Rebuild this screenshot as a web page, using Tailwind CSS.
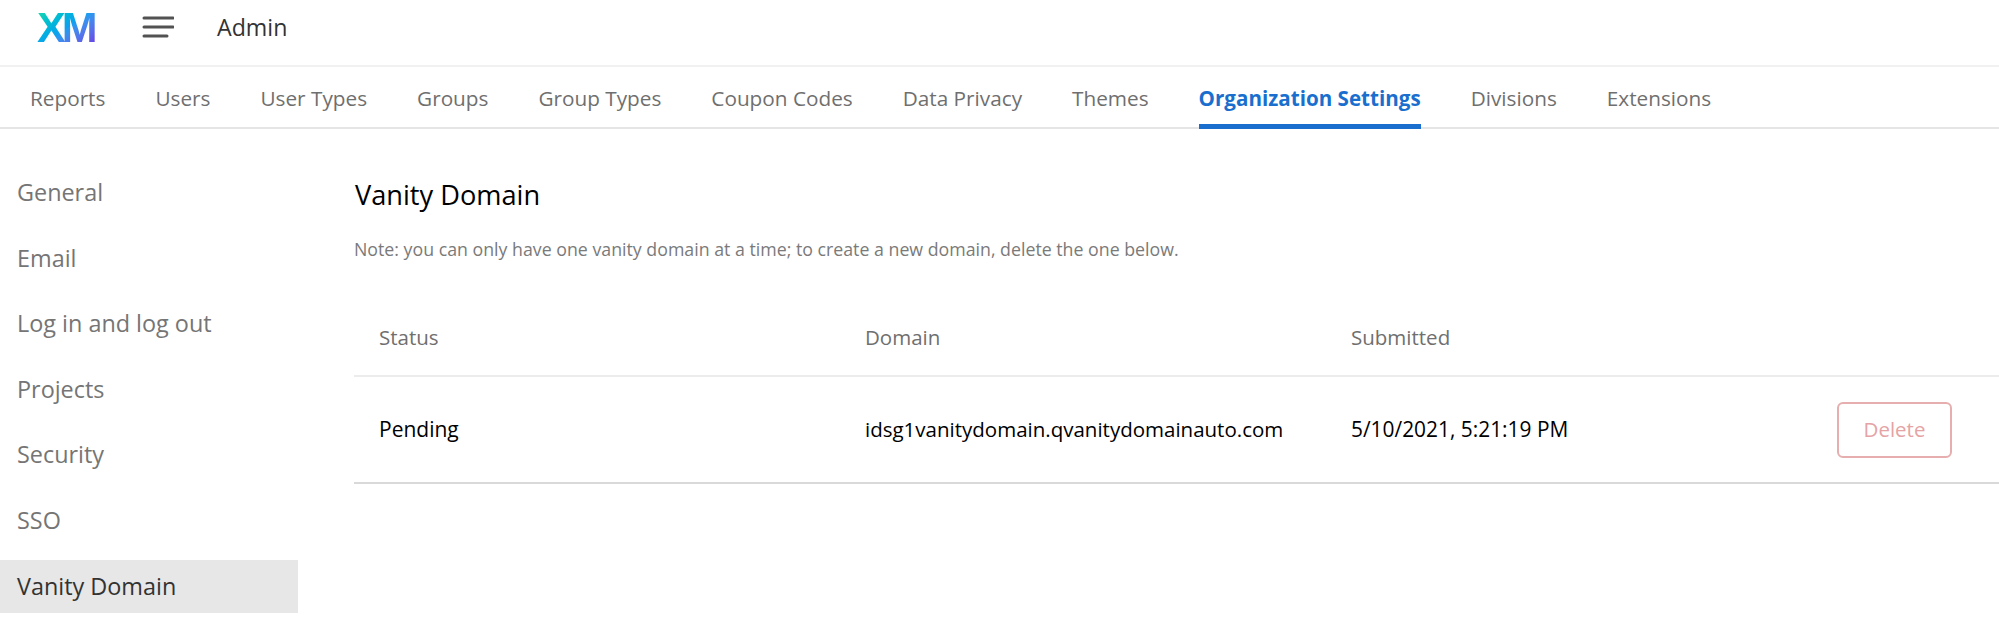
<!DOCTYPE html>
<html lang="en">
<head>
  <meta charset="UTF-8" />
  <title>Admin - Vanity Domain</title>
  <script src="https://cdn.jsdelivr.net/npm/@tailwindcss/browser@4"></script>
</head>
<body class="bg-white font-['Open_Sans',sans-serif] h-[637px] overflow-hidden">
  <!-- Header -->
  <header class="h-[67px] flex items-center pb-[11px] border-b-2 border-[#f1f1f1]">
    <div class="ml-[37px] w-[60px] font-['Liberation_Sans',sans-serif] font-bold text-[43px] leading-none tracking-[-4px] text-transparent bg-clip-text bg-linear-to-br from-[#25dfa0] via-[#0f9ff0] to-[#6a22e0]">XM</div>
    <svg class="ml-[45px]" width="32" height="24" viewBox="0 0 32 24" fill="none" stroke="#525252" stroke-width="3" stroke-linecap="round">
      <path d="M2 3h29M2 12h29M2 21h23" />
    </svg>
    <span class="ml-[43px] text-[23.2px] text-[#333]">Admin</span>
  </header>

  <!-- Tabs -->
  <nav class="h-[62px] flex gap-[50px] pl-[30px] border-b-2 border-[#e5e5e5] text-[20.75px] text-[#6f6f6f]">
    <a class="pt-[16px]">Reports</a>
    <a class="pt-[16px]">Users</a>
    <a class="pt-[16px]">User Types</a>
    <a class="pt-[16px]">Groups</a>
    <a class="pt-[16px]">Group Types</a>
    <a class="pt-[16px]">Coupon Codes</a>
    <a class="pt-[16px]">Data Privacy</a>
    <a class="pt-[16px]">Themes</a>
    <a class="pt-[16px] h-[62px] text-[20.6px] font-bold text-[#1a6fce] border-b-[5px] border-[#1a6fce]">Organization Settings</a>
    <a class="pt-[16px]">Divisions</a>
    <a class="pt-[16px]">Extensions</a>
  </nav>

  <div class="flex">
    <!-- Sidebar -->
    <aside class="w-[298px] pt-[31px] shrink-0 text-[23.4px] text-[#757575]">
      <div class="h-[65.5px] pl-[17px] flex items-center">General</div>
      <div class="h-[65.5px] pl-[17px] flex items-center">Email</div>
      <div class="h-[65.5px] pl-[17px] flex items-center">Log in and log out</div>
      <div class="h-[65.5px] pl-[17px] flex items-center">Projects</div>
      <div class="h-[65.5px] pl-[17px] flex items-center">Security</div>
      <div class="h-[65.5px] pl-[17px] flex items-center">SSO</div>
      <div class="h-[53px] mt-[7px] pl-[17px] flex items-center bg-[#e7e7e7] text-[#333]">Vanity Domain</div>
    </aside>

    <!-- Content -->
    <main class="flex-1 ml-[56px] pt-[48px]">
      <h2 class="pl-[1px] text-[27.2px] leading-[36px] text-black">Vanity Domain</h2>
      <p class="mt-[24px] text-[17.75px] leading-[24px] text-[#7a7a7a]">Note: you can only have one vanity domain at a time; to create a new domain, delete the one below.</p>
      <div class="mt-[41px] h-[75px] flex items-center pb-[2px] border-b-2 border-[#ececec] pl-[25px] text-[20.5px] text-[#6f6f6f]">
        <div class="w-[486px]">Status</div>
        <div class="w-[486px]">Domain</div>
        <div>Submitted</div>
      </div>
      <div class="h-[107px] flex items-center border-b-2 border-[#d9d9d9] pl-[25px] text-[20.5px] text-black">
        <div class="w-[486px] text-[21px]">Pending</div>
        <div class="w-[486px]">idsg1vanitydomain.qvanitydomainauto.com</div>
        <div class="text-[20.9px]">5/10/2021, 5:21:19 PM</div>
        <button class="ml-auto mr-[47px] w-[115px] h-[56px] rounded-[6px] border-2 border-[#e6aeae] text-[#e5a3a5]">Delete</button>
      </div>
    </main>
  </div>
</body>
</html>
